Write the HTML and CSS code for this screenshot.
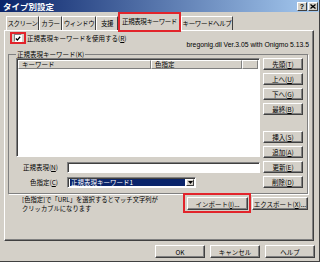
FILE: index.html
```html
<!DOCTYPE html>
<html lang="ja">
<head>
    <meta charset="UTF-8">
    <title>タイプ別設定</title>
    <link rel="stylesheet" href="styles.css">
</head>
<body>
    <div class="dialog">

        <div class="titlebar">
            <span class="title">タイプ別設定</span>
            <span class="cap-btns">
                <span class="cap-btn">?</span>
                <span class="cap-btn">
                    <svg width="6" height="5" viewBox="0 0 6 5"><path d="M0.5 0.5 L5.5 4.5 M5.5 0.5 L0.5 4.5" stroke="#000" stroke-width="1.3"/></svg>
                </span>
            </span>
        </div>

        <!-- tabs -->
        <div class="tabs">
            <span class="tab">スクリーン</span>
            <span class="tab">カラー</span>
            <span class="tab">ウィンドウ</span>
            <span class="tab">支援</span>
            <span class="tab active">正規表現キーワード</span>
            <span class="tab">キーワードヘルプ</span>
        </div>

        <div class="panel">
            <div class="use-row">
                <span class="red-box check-wrap">
                    <span class="checkbox">
                        <svg width="7" height="7" viewBox="0 0 7 7"><path d="M1 3.5 L2.8 5.3 L6 1.5" stroke="#000" stroke-width="1.5" fill="none"/></svg>
                    </span>
                </span>
                <span class="use-label">正規表現キーワードを使用する(<u>R</u>)</span>
            </div>
            <div class="version">bregonig.dll Ver.3.05 with Onigmo 5.13.5</div>

            <fieldset class="group">
                <legend>正規表現キーワード(<u>K</u>)</legend>
                <div class="group-inner">
                    <div class="left-col">
                        <div class="listview">
                            <div class="lv-head">
                                <span class="lv-col col-key">キーワード</span>
                                <span class="lv-col col-color">色指定</span>
                                <span class="lv-col col-rest"></span>
                            </div>
                        </div>
                        <div class="fields">
                            <span class="field-label">正規表現(<u>N</u>)</span>
                            <span class="textbox"></span>
                            <span class="field-label">色指定(<u>C</u>)</span>
                            <span class="combo">
                                <span class="combo-value">正規表現キーワード1</span>
                                <span class="combo-arrow">
                                    <svg width="5" height="3" viewBox="0 0 5 3"><path d="M0 0 H5 L2.5 3 Z" fill="#000"/></svg>
                                </span>
                            </span>
                        </div>
                    </div>
                    <div class="side-btns">
                        <div class="btn-group">
                            <span class="btn">先頭(<u>T</u>)</span>
                            <span class="btn">上へ(<u>U</u>)</span>
                            <span class="btn">下へ(<u>G</u>)</span>
                            <span class="btn">最終(<u>B</u>)</span>
                        </div>
                        <div class="btn-group">
                            <span class="btn">挿入(<u>S</u>)</span>
                            <span class="btn">追加(<u>A</u>)</span>
                            <span class="btn">更新(<u>E</u>)</span>
                            <span class="btn">削除(<u>D</u>)</span>
                        </div>
                    </div>
                </div>
            </fieldset>

            <div class="bottom-row">
                <div class="note">
                    <span class="note-line">[色指定]で「URL」を選択するとマッチ文字列が</span>
                    <span class="note-line">クリッカブルになります</span>
                </div>
                <span class="red-box import-wrap">
                    <span class="btn btn-import">インポート(<u>I</u>)...</span>
                </span>
                <span class="btn btn-export">エクスポート(<u>X</u>)...</span>
            </div>
        </div>

        <div class="dialog-btns">
            <span class="btn btn-dlg">OK</span>
            <span class="btn btn-dlg">キャンセル</span>
            <span class="btn btn-dlg">ヘルプ</span>
        </div>
    </div>
</body>
</html>
```

FILE: styles.css
```css
* {
    box-sizing: border-box;
}
body {
    margin: 0;
    background-color: #D4D0C8;
    font-family: "Noto Sans CJK JP", "Liberation Sans", sans-serif;
    font-size: 6.5px;
    color: #000;
}
u {
    text-decoration-thickness: 1px;
}

.dialog {
    width: 320px;
    height: 262px;
    border-right: 1px solid #404040;
    border-bottom: 1px solid #404040;
    display: flex;
    flex-direction: column;
}

/* title bar */
.titlebar {
    height: 12px;
    background: linear-gradient(to right, #0A246A, #A6CAF0);
    display: flex;
    align-items: center;
    justify-content: space-between;
    padding: 0 1px 0 3px;
}
.title {
    color: white;
    font-weight: bold;
    font-size: 8.5px;
    line-height: 12px;
}
.cap-btns {
    display: flex;
    gap: 1px;
}
.cap-btn {
    width: 10px;
    height: 9px;
    background-color: #D4D0C8;
    border: 1px solid;
    border-color: #fff #404040 #404040 #fff;
    display: flex;
    align-items: center;
    justify-content: center;
    font-family: "Liberation Sans", sans-serif;
    font-weight: bold;
    font-size: 7px;
    line-height: 7px;
}

/* tabs */
.tabs {
    height: 18px;
    display: flex;
    align-items: flex-end;
    padding-left: 6px;
}
.tab {
    height: 14px;
    border: 1px solid;
    border-color: #fff #404040 transparent #fff;
    border-bottom: none;
    line-height: 12px;
    text-align: center;
    white-space: nowrap;
    letter-spacing: -0.4px;
}
.tab:nth-child(1) { width: 33px; }
.tab:nth-child(2) { width: 23px; }
.tab:nth-child(3) { width: 34px; }
.tab:nth-child(4) { width: 22px; }
.tab:nth-child(6) { width: 52px; }
.tab.active {
    width: 63px;
    height: 20px;
    margin-bottom: -2px;
    border: 2px solid #E2242B;
    background-color: #D4D0C8;
    line-height: 15px;
    position: relative;
    z-index: 2;
}

.red-box {
    border: 2px solid #E2242B;
}

/* panel */
.panel {
    margin-left: 4px;
    width: 310px;
    height: 211px;
    border: 1px solid;
    border-color: #fff #404040 #404040 #fff;
    box-shadow: inset -1px -1px 0 #808080;
    padding-top: 1px;
}
.use-row {
    display: flex;
    align-items: center;
    height: 12px;
    margin-left: 5px;
}
.check-wrap {
    height: 12px;
    padding: 0 2px;
    display: flex;
    align-items: center;
}
.checkbox {
    width: 8px;
    height: 8px;
    background-color: white;
    border: 1px solid;
    border-color: #808080 #fff #fff #808080;
    display: flex;
    align-items: center;
    justify-content: center;
}
.checkbox svg {
    display: block;
}
.use-label {
    margin-left: 1px;
    line-height: 10px;
}
.version {
    margin-top: -3px;
    padding-right: 4px;
    text-align: right;
    font-family: "Liberation Sans", sans-serif;
    font-size: 6.8px;
    line-height: 7px;
}

/* group box */
.group {
    margin: 2px 5px 0 3px;
    width: 300px;
    height: 144px;
    padding: 0 4px 0 7px;
    border: 1px solid #808080;
    box-shadow: 1px 1px 0 #fff;
}
.group legend {
    padding: 0 1px;
    margin-left: 0;
    line-height: 8px;
}
.group-inner {
    display: flex;
    gap: 3px;
}
.left-col {
    width: 244px;
    display: flex;
    flex-direction: column;
}
.listview {
    height: 99px;
    background-color: white;
    border: 1px solid;
    border-color: #808080 #fff #fff #808080;
    box-shadow: inset 1px 1px 0 #404040;
    padding: 1px 1px 0 1px;
}
.lv-head {
    display: flex;
    height: 9px;
}
.lv-col {
    background-color: #D4D0C8;
    border: 1px solid;
    border-color: #fff #808080 #808080 #fff;
    padding-left: 3px;
    line-height: 7px;
}
.col-key { width: 133px; }
.col-color { width: 91px; }
.col-rest { flex: 1; }

.fields {
    margin-top: 5px;
    display: grid;
    grid-template-columns: 51px 1fr;
    row-gap: 4px;
}
.field-label {
    text-align: right;
    padding-right: 9px;
    line-height: 11px;
}
.textbox {
    height: 11px;
    background-color: white;
    border: 1px solid;
    border-color: #808080 #fff #fff #808080;
    box-shadow: inset 1px 1px 0 #404040;
}
.combo {
    width: 129px;
    height: 11px;
    background-color: white;
    border: 1px solid;
    border-color: #808080 #fff #fff #808080;
    box-shadow: inset 1px 1px 0 #404040;
    display: flex;
    padding: 1px 1px 1px 2px;
}
.combo-value {
    flex: 1;
    background-color: #0A246A;
    color: white;
    line-height: 7px;
    padding-left: 1px;
    margin-right: 1px;
}
.combo-arrow {
    width: 8px;
    background-color: #D4D0C8;
    border: 1px solid;
    border-color: #fff #404040 #404040 #fff;
    display: flex;
    align-items: center;
    justify-content: center;
}

.side-btns {
    width: 40px;
    display: flex;
    flex-direction: column;
    justify-content: space-between;
    height: 130px;
}
.btn-group {
    display: flex;
    flex-direction: column;
    gap: 3px;
}

/* buttons */
.btn {
    display: flex;
    align-items: center;
    justify-content: center;
    height: 12px;
    background-color: #D4D0C8;
    border: 1px solid;
    border-color: #fff #404040 #404040 #fff;
    box-shadow: inset -1px -1px 0 #808080;
    white-space: nowrap;
    line-height: 10px;
}

.bottom-row {
    display: flex;
    align-items: flex-start;
    margin-top: -1px;
}
.note {
    flex: 1;
    margin: 3px 0 0 17px;
    display: flex;
    flex-direction: column;
}
.note-line {
    height: 8.5px;
    line-height: 8.5px;
    font-size: 6.3px;
    overflow: hidden;
}
.import-wrap {
    padding: 2px 1px 1px 2px;
    margin-right: 1px;
}
.btn-import {
    width: 61px;
    height: 13px;
}
.btn-export {
    width: 56px;
    height: 13px;
    margin: 4px 5px 0 0;
}

.dialog-btns {
    display: flex;
    justify-content: flex-end;
    gap: 5px;
    padding-right: 4px;
    margin-top: 4px;
}
.btn-dlg {
    width: 50px;
    height: 13px;
}
```
